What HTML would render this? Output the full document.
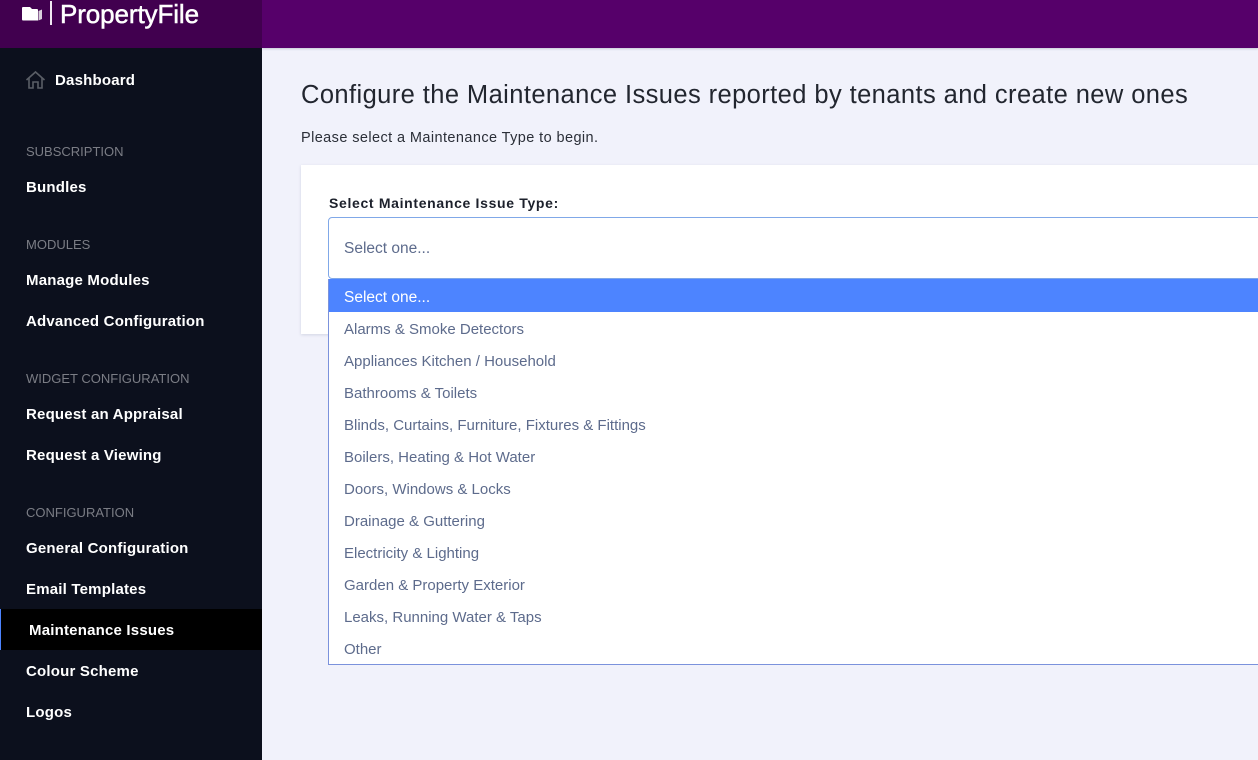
<!DOCTYPE html>
<html><head><meta charset="utf-8">
<style>
html,body{margin:0;padding:0;width:1258px;height:760px;overflow:hidden;background:#f1f2fb;font-family:"Liberation Sans",sans-serif;}
.abs,.n,.h,.o{position:absolute;white-space:nowrap;}
.top{position:absolute;left:262px;top:0;width:996px;height:48px;background:#56006a;clip-path:inset(0 0 -3px 0);box-shadow:0 1px 2px rgba(120,130,150,.35);}
.logoBg{position:absolute;left:0;top:0;width:262px;height:48px;background:#41004f;}
.side{position:absolute;left:0;top:48px;width:262px;height:712px;background:#0c101d;}
.n{left:26px;color:#fff;font-size:15px;font-weight:700;line-height:20px;letter-spacing:.2px;}
.h{left:26px;color:#7b7d85;font-size:13px;line-height:18px;}
.active{position:absolute;left:0;top:609px;width:262px;height:41px;background:#000;}
.bar{position:absolute;left:0;top:609px;width:1px;height:41px;background:#4d84ff;}
.card{position:absolute;left:301px;top:165px;width:957px;height:169px;background:#fff;box-shadow:0 1px 3px rgba(90,100,130,.2);}
.box{position:absolute;left:328px;top:217px;width:940px;height:60px;border:1px solid #80a8e8;border-radius:4px;background:#fff;}
.list{position:absolute;left:328px;top:279px;width:940px;height:385px;border:1px solid #7b92dc;border-top:none;background:#fff;}
.sel{position:absolute;left:329px;top:279px;width:929px;height:33px;background:#4d84ff;}
.o{left:344px;color:#5d6b8c;font-size:15px;line-height:20px;}
</style></head><body>
<div class="logoBg"></div><div class="top"></div>
<svg class="abs" style="left:21px;top:5px" width="24" height="18" viewBox="0 0 24 18"><path d="M1 3Q1 2 2 2H9L11 4H16Q17 4 17 5V15.500H2Q1 15.500 1 14.500Z" fill="#fff"/><path d="M17.500 6L21 4.500V14L17.500 15.500Z" fill="#d9cfdc"/></svg>
<div class="abs" style="left:50px;top:1px;width:2px;height:24px;background:#f0e8f2"></div>
<div class="abs" style="left:60px;top:-2px;color:#fff;font-size:26px;line-height:32px;letter-spacing:-.1px;-webkit-text-stroke:.5px #fff">PropertyFile</div>
<div class="side"></div>
<div class="active"></div><div class="bar"></div>
<svg class="abs" style="left:25px;top:70px" width="21" height="20" viewBox="0 0 21 20" fill="none" stroke="#5a5e66" stroke-width="1.6"><path d="M1.500 10L10.500 2L19.500 10"/><path d="M4 8V18H8V12H13V18H17V8"/></svg>
<div class="n" style="left:55px;top:71px">Dashboard</div>
<div class="h" style="top:143px">SUBSCRIPTION</div>
<div class="n" style="top:178px">Bundles</div>
<div class="h" style="top:236px">MODULES</div>
<div class="n" style="top:271px">Manage Modules</div>
<div class="n" style="top:312px">Advanced Configuration</div>
<div class="h" style="top:370px">WIDGET CONFIGURATION</div>
<div class="n" style="top:405px">Request an Appraisal</div>
<div class="n" style="top:446px">Request a Viewing</div>
<div class="h" style="top:504px">CONFIGURATION</div>
<div class="n" style="top:539px">General Configuration</div>
<div class="n" style="top:580px">Email Templates</div>
<div class="n" style="left:29px;top:621px">Maintenance Issues</div>
<div class="n" style="top:662px">Colour Scheme</div>
<div class="n" style="top:703px">Logos</div>
<div class="abs" style="left:301px;top:79px;font-size:25.500px;line-height:32px;color:#22262f;letter-spacing:.41px">Configure the Maintenance Issues reported by tenants and create new ones</div>
<div class="abs" style="left:301px;top:128px;font-size:14.500px;line-height:20px;color:#2b2f38;letter-spacing:.41px">Please select a Maintenance Type to begin.</div>
<div class="card"></div>
<div class="abs" style="left:329px;top:193px;font-size:14px;font-weight:700;line-height:20px;color:#1c202b;letter-spacing:.67px">Select Maintenance Issue Type:</div>
<div class="box"></div>
<div class="o" style="top:239px;font-size:15.500px">Select one...</div>
<div class="list"></div><div class="sel"></div>
<div class="o" style="top:288px;color:#fff;font-size:15.500px">Select one...</div>
<div class="o" style="top:320px">Alarms &amp; Smoke Detectors</div>
<div class="o" style="top:352px">Appliances Kitchen / Household</div>
<div class="o" style="top:384px">Bathrooms &amp; Toilets</div>
<div class="o" style="top:416px">Blinds, Curtains, Furniture, Fixtures &amp; Fittings</div>
<div class="o" style="top:448px">Boilers, Heating &amp; Hot Water</div>
<div class="o" style="top:480px">Doors, Windows &amp; Locks</div>
<div class="o" style="top:512px">Drainage &amp; Guttering</div>
<div class="o" style="top:544px">Electricity &amp; Lighting</div>
<div class="o" style="top:576px">Garden &amp; Property Exterior</div>
<div class="o" style="top:608px">Leaks, Running Water &amp; Taps</div>
<div class="o" style="top:640px">Other</div>
</body></html>
